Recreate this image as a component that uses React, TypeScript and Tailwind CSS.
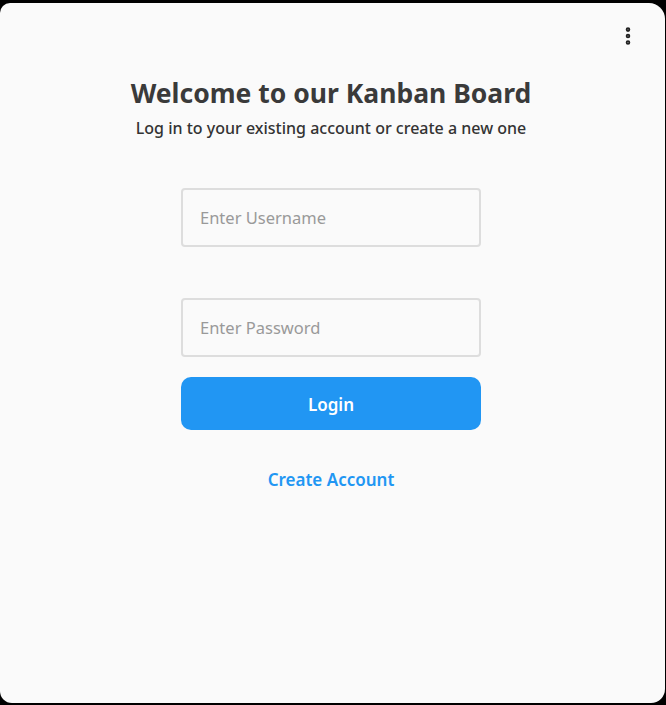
import { EllipsisVertical } from 'lucide-react';

export default function App() {
  return (
    <div className="w-[666px] h-[705px] bg-black pt-[3px] pr-px pb-[2px]" style={{ fontFamily: '"Noto Sans", "Open Sans", sans-serif' }}>
      <div className="relative h-full bg-[#fafafa] rounded-tl-[10px] rounded-tr-[16px] rounded-bl-[12px] rounded-br-[14px] flex flex-col items-center pr-[3px]">
        <button className="absolute right-[26px] top-[22px] text-[#222]">
          <EllipsisVertical size={22} strokeWidth={3} />
        </button>
        <h1 className="mt-[73px] text-[26.5px] leading-[34px] font-bold text-[#3a3a3a]">Welcome to our Kanban Board</h1>
        <p className="mt-[6px] text-[16px] leading-[24px] font-medium text-[#333]">
          Log in to your existing account or create a new one
        </p>
        <div className="mt-[48px] w-[300px] flex flex-col">
          <input
            placeholder="Enter Username"
            className="h-[59px] px-[17px] border-2 border-[#dddddd] rounded-[4px] bg-[#fafafa] text-[16.5px] outline-none placeholder:text-[#999]"
          />
          <input
            type="password"
            placeholder="Enter Password"
            className="mt-[51px] h-[59px] px-[17px] border-2 border-[#dddddd] rounded-[4px] bg-[#fafafa] text-[16.5px] outline-none placeholder:text-[#999]"
          />
          <button className="mt-[20px] h-[53px] pt-[3px] rounded-[10px] bg-[#2196f3] text-white text-[17px] font-semibold">
            Login
          </button>
          <button className="mt-[38px] text-[#2196f3] text-[17px] font-semibold leading-[24px]">Create Account</button>
        </div>
      </div>
    </div>
  );
}
